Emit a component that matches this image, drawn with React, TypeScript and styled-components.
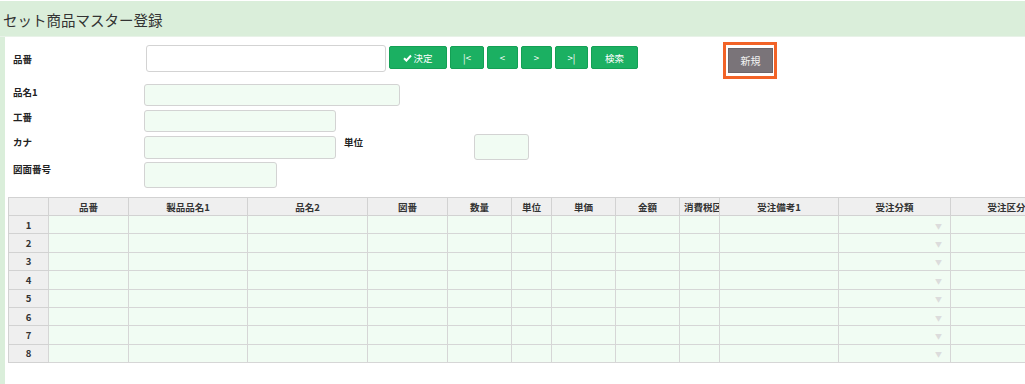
import React from "react";
import styled, { createGlobalStyle } from "styled-components";

const GlobalStyle = createGlobalStyle`
  html, body { margin: 0; padding: 0; background: #fff; }
  body { font-family: "Noto Sans CJK JP", "Noto Sans", sans-serif; color: #333; }
  * { box-sizing: border-box; }
`;

const Page = styled.div`
  width: 1025px;
  height: 384px;
  overflow: hidden;
  padding-top: 1px;
`;

const TitleBar = styled.div`
  height: 36px;
  background: #daeeda;
  padding-left: 3px;
  font-size: 14.5px;
  line-height: 38px;
  color: #333;
  border-bottom: 1px solid #e8f2e8;
`;

const Body = styled.div`
  border-left: 5px solid #daeeda;
  height: 347px;
  padding: 5px 0 0 3px;
`;

const Form = styled.div`
  padding-left: 5px;
  display: flex;
  flex-direction: column;
`;

const Row = styled.div<{ $mt?: number; $h?: number }>`
  display: flex;
  align-items: flex-start;
  margin-top: ${(p) => p.$mt ?? 0}px;
  height: ${(p) => (p.$h ? `${p.$h}px` : "auto")};
`;

const Label = styled.div<{ $w?: number; $mt?: number; $ml?: number }>`
  width: ${(p) => p.$w ?? 131}px;
  flex: none;
  font-size: 9.5px;
  font-weight: 700;
  line-height: 14px;
  color: #222;
  margin-top: ${(p) => p.$mt ?? 0}px;
  margin-left: ${(p) => p.$ml ?? 0}px;
`;

const Input = styled.div<{ $w: number; $h: number; $white?: boolean; $ml?: number; $mt?: number }>`
  flex: none;
  width: ${(p) => p.$w}px;
  height: ${(p) => p.$h}px;
  margin-left: ${(p) => p.$ml ?? 0}px;
  margin-top: ${(p) => p.$mt ?? 0}px;
  background: ${(p) => (p.$white ? "#fff" : "#f1fcf3")};
  border: 1px solid #d3d3d3;
  border-radius: 3px;
`;

const ButtonGroup = styled.div`
  display: flex;
  gap: 3px;
  margin-left: 3px;
  margin-top: 4px;
`;

const GreenButton = styled.div<{ $w: number }>`
  width: ${(p) => p.$w}px;
  height: 23px;
  background: #1bb062;
  border: 1px solid #14a055;
  border-radius: 2px;
  color: #fff;
  font-size: 9.5px;
  display: flex;
  align-items: center;
  justify-content: center;
  gap: 1px;
`;

const HighlightBox = styled.div`
  margin-left: 85px;
  width: 54px;
  height: 37px;
  border: 3px solid #f26327;
  padding: 3px 1px 3px 2px;
`;

const GrayButton = styled.div`
  width: 45px;
  height: 25px;
  background: #7a7479;
  border: 1px solid #6a656a;
  color: #f4f4f4;
  font-size: 10px;
  display: flex;
  align-items: center;
  justify-content: center;
`;

const TableWrap = styled.div`
  margin-top: 9px;
  width: 1100px;
`;

const Table = styled.table<{ $w: number }>`
  width: ${(p) => p.$w}px;
  border-collapse: collapse;
  table-layout: fixed;
  font-size: 9.5px;
`;

const Th = styled.th<{ $w: number }>`
  width: ${(p) => p.$w}px;
  height: 18px;
  padding: 0 4px;
  background: #efefef;
  border: 1px solid #d2d2d2;
  font-weight: 700;
  color: #333;
  text-align: center;
  white-space: nowrap;
  overflow: hidden;
`;

const NumCell = styled.td`
  height: 18.4px;
  padding: 0;
  background: #efefef;
  border-left: 1px solid #d2d2d2;
  border-bottom: 1px solid #d2d2d2;
  text-align: center;
  font-weight: 700;
  color: #333;
`;

const Cell = styled.td`
  height: 18.4px;
  padding: 0 8px 0 0;
  background: #f1fcf3;
  border: 1px solid #d6d6d6;
  border-top-color: #e4eee6;
  text-align: right;
  vertical-align: middle;
`;

const Caret = styled.span`
  color: #dcdcdc;
  font-size: 7px;
`;

const Check = () => (
  <svg width="9" height="8" viewBox="0 0 9 8">
    <path d="M1 4.2 L3.4 6.5 L8 1.5" stroke="#fff" strokeWidth="2" fill="none" />
  </svg>
);

const columns: { label: string; w: number }[] = [
  { label: "品番", w: 80 },
  { label: "製品品名1", w: 119 },
  { label: "品名2", w: 120 },
  { label: "図番", w: 80 },
  { label: "数量", w: 64 },
  { label: "単位", w: 40 },
  { label: "単価", w: 64 },
  { label: "金額", w: 64 },
  { label: "消費税区分", w: 40 },
  { label: "受注備考1", w: 119 },
  { label: "受注分類", w: 112 },
  { label: "受注区分", w: 112 },
];

const tableWidth = 40 + columns.reduce((s, c) => s + c.w, 0);

export default function App() {
  return (
    <>
      <GlobalStyle />
      <Page>
        <TitleBar>セット商品マスター登録</TitleBar>
        <Body>
          <Form>
            <Row $h={37}>
              <Label $mt={10}>品番</Label>
              <Input $w={240} $h={27} $white $ml={2} $mt={3} />
              <ButtonGroup>
                <GreenButton $w={58}>
                  <Check />
                  決定
                </GreenButton>
                <GreenButton $w={34}>|&lt;</GreenButton>
                <GreenButton $w={31}>&lt;</GreenButton>
                <GreenButton $w={31}>&gt;</GreenButton>
                <GreenButton $w={33}>&gt;|</GreenButton>
                <GreenButton $w={47}>検索</GreenButton>
              </ButtonGroup>
              <HighlightBox>
                <GrayButton>新規</GrayButton>
              </HighlightBox>
            </Row>
            <Row $mt={5}>
              <Label $mt={1}>品名1</Label>
              <Input $w={256} $h={22} />
            </Row>
            <Row $mt={4}>
              <Label>工番</Label>
              <Input $w={192} $h={22} />
            </Row>
            <Row $mt={2}>
              <Label $mt={1}>カナ</Label>
              <Input $w={192} $h={23} $mt={2} />
              <Label $w={130} $mt={1} $ml={8}>単位</Label>
              <Input $w={55} $h={26} />
            </Row>
            <Row $mt={2}>
              <Label>図面番号</Label>
              <Input $w={133} $h={26} />
            </Row>
          </Form>
          <TableWrap>
            <Table $w={tableWidth}>
              <thead>
                <tr>
                  <Th $w={40} />
                  {columns.map((c) => (
                    <Th key={c.label} $w={c.w}>
                      {c.label}
                    </Th>
                  ))}
                </tr>
              </thead>
              <tbody>
                {[1, 2, 3, 4, 5, 6, 7, 8].map((n) => (
                  <tr key={n}>
                    <NumCell>{n}</NumCell>
                    {columns.map((c) => (
                      <Cell key={c.label}>{c.label === "受注分類" ? <Caret>▼</Caret> : null}</Cell>
                    ))}
                  </tr>
                ))}
              </tbody>
            </Table>
          </TableWrap>
        </Body>
      </Page>
    </>
  );
}
